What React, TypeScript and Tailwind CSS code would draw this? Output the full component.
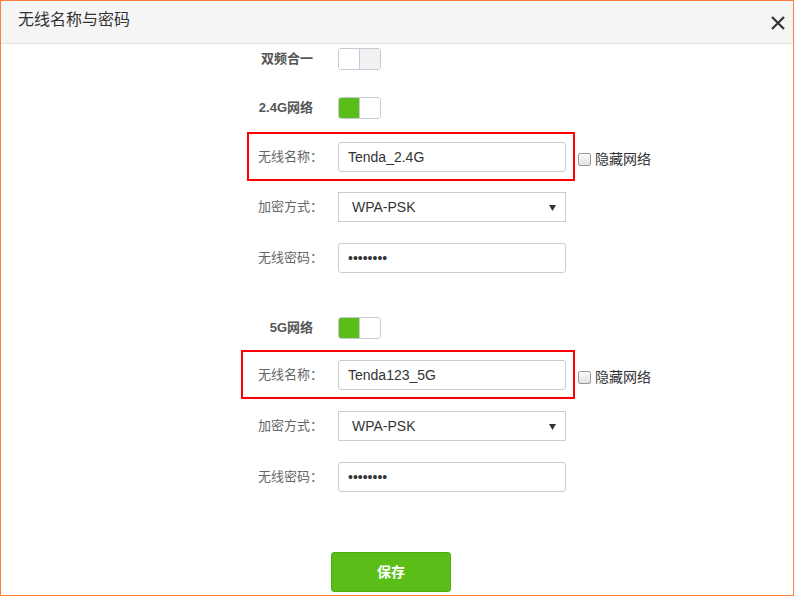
import React from "react";

const font = "font-['Liberation_Sans','Microsoft_YaHei','Noto_Sans_CJK_SC',sans-serif]";

const Toggle = ({ on }: { on: boolean }) => (
  <div className="flex w-[43px] h-[22px] border border-[#c3ccd6] rounded-[3px] overflow-hidden">
    {on ? (
      <>
        <div className="w-[20px] h-full bg-[#5bbd17]" />
        <div className="flex-1 h-full bg-white border-l border-[#c3ccd6]" />
      </>
    ) : (
      <>
        <div className="w-[21px] h-full bg-white border-r border-[#c3ccd6]" />
        <div className="flex-1 h-full bg-[#f1f1f1]" />
      </>
    )}
  </div>
);

const SwitchRow = ({ label, on, className }: { label: string; on: boolean; className: string }) => (
  <div className={`flex items-center h-[22px] ${className}`}>
    <div className="w-[312px] text-right text-[13px] font-bold text-[#555]">{label}</div>
    <div className="ml-[25px]">
      <Toggle on={on} />
    </div>
  </div>
);

const Arrow = () => (
  <svg width="7" height="6" viewBox="0 0 7 6" className="absolute right-[9px] top-[12px]">
    <polygon points="0,0 7,0 3.5,6" fill="#333" />
  </svg>
);

const SelectRow = ({ className }: { className: string }) => (
  <div className={`flex items-center h-[30px] ${className}`}>
    <div className="w-[325px] pl-[257px] text-[13px] text-[#666] whitespace-nowrap">加密方式：</div>
    <div className="relative ml-[12px] w-[228px] h-[30px] border border-[#ccc] bg-white flex items-center pl-[13px] text-[14px] text-[#333]">
      WPA-PSK
      <Arrow />
    </div>
  </div>
);

const PwdRow = ({ className }: { className: string }) => (
  <div className={`flex items-center h-[30px] ${className}`}>
    <div className="w-[325px] pl-[257px] text-[13px] text-[#666] whitespace-nowrap">无线密码：</div>
    <input
      type="password"
      readOnly
      value="12345678"
      className="ml-[12px] w-[228px] h-[30px] border border-[#ccc] rounded-[3px] px-[9px] text-[14px] text-[#333] outline-none"
    />
  </div>
);

const NameRow = ({
  value,
  wide,
  className,
}: {
  value: string;
  wide: boolean;
  className: string;
}) => (
  <div className={`flex items-center ${className}`}>
    <div
      className={`flex items-center h-[49px] border-2 border-[#f00] ${
        wide ? "ml-[240px] w-[334px]" : "ml-[246px] w-[328px]"
      }`}
    >
      <div
        className={`${wide ? "pl-[15px] w-[83px]" : "pl-[9px] w-[77px]"} text-[13px] text-[#666] whitespace-nowrap`}
      >
        无线名称：
      </div>
      <input
        readOnly
        value={value}
        className="ml-[12px] w-[228px] h-[30px] border border-[#ccc] rounded-[3px] px-[9px] text-[14px] text-[#333] outline-none"
      />
    </div>
    <label className="flex items-center ml-[3px] mt-[5px]">
      <span className="w-[13px] h-[13px] border border-[#999] rounded-[2px] bg-gradient-to-b from-[#fafafa] to-[#e2e2e2]" />
      <span className="ml-[4px] text-[14px] text-[#333] whitespace-nowrap">隐藏网络</span>
    </label>
  </div>
);

export default function App() {
  return (
    <div className={`w-[794px] h-[596px] border border-[#ff7f3f] bg-white ${font} overflow-hidden`}>
      <div className="flex items-center justify-between h-[43px] bg-[#f5f5f5] border-b border-[#e3e3e3] pl-[17px] pr-[7px]">
        <div className="text-[16px] text-[#333] -mt-[4px]">无线名称与密码</div>
        <svg width="16" height="16" viewBox="0 0 16 16" className="mt-[2px]">
          <path d="M2 2 L14 14 M14 2 L2 14" stroke="#333" strokeWidth="2.2" />
        </svg>
      </div>
      <SwitchRow label="双频合一" on={false} className="mt-[4px]" />
      <SwitchRow label="2.4G网络" on={true} className="mt-[27px]" />
      <NameRow value="Tenda_2.4G" wide={false} className="mt-[13px]" />
      <SelectRow className="mt-[11px]" />
      <PwdRow className="mt-[21px]" />
      <SwitchRow label="5G网络" on={true} className="mt-[44px]" />
      <NameRow value="Tenda123_5G" wide={true} className="mt-[11px]" />
      <SelectRow className="mt-[12px]" />
      <PwdRow className="mt-[21px]" />
      <button className="block mt-[60px] ml-[330px] w-[120px] h-[40px] rounded-[3px] bg-[#5bbd17] border border-[#52aa14] text-white text-[14px] font-bold">
        保存
      </button>
    </div>
  );
}
